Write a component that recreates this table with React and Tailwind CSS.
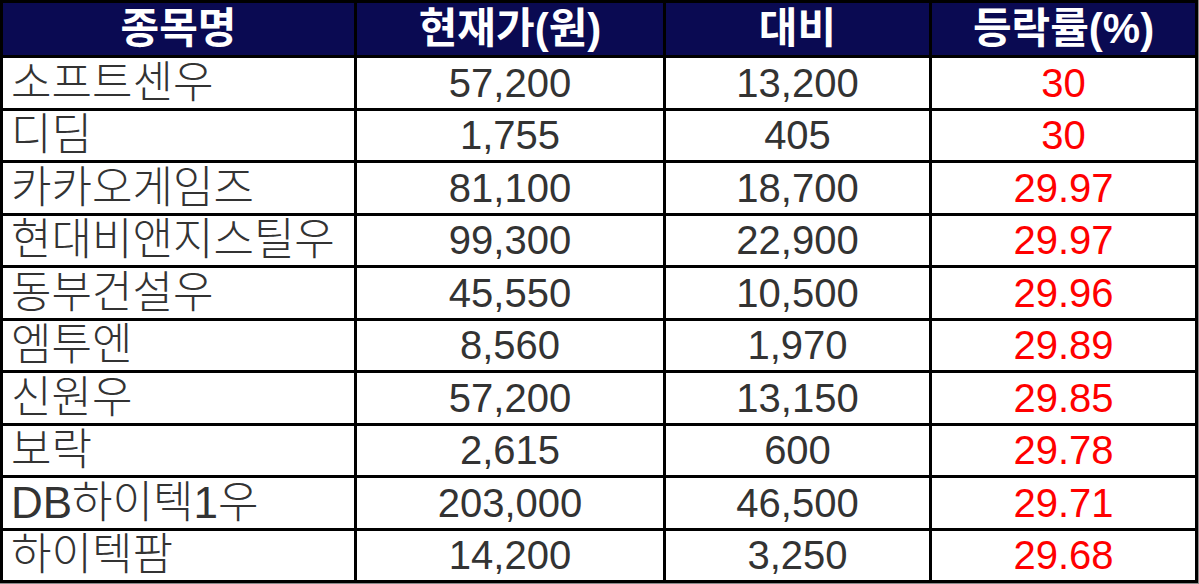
const rows = [
  ['소프트센우', '57,200', '13,200', '30'],
  ['디딤', '1,755', '405', '30'],
  ['카카오게임즈', '81,100', '18,700', '29.97'],
  ['현대비앤지스틸우', '99,300', '22,900', '29.97'],
  ['동부건설우', '45,550', '10,500', '29.96'],
  ['엠투엔', '8,560', '1,970', '29.89'],
  ['신원우', '57,200', '13,150', '29.85'],
  ['보락', '2,615', '600', '29.78'],
  ['DB하이텍1우', '203,000', '46,500', '29.71'],
  ['하이텍팜', '14,200', '3,250', '29.68'],
];

const headers = ['종목명', '현재가(원)', '대비', '등락률(%)'];

export default function App() {
  return (
    <div
      className="w-[1199px] h-[584px] bg-[#8a8a8a]"
      style={{ fontFamily: '"Liberation Sans", "Noto Sans CJK KR", sans-serif' }}
    >
      <div className="w-[1198px] grid grid-cols-[351px_306px_263px_263px] grid-rows-[52px_repeat(10,49.5px)] gap-[3px] p-[3px] bg-black">
        {headers.map((h) => (
          <div
            key={h}
            className="bg-[#0a0a52] text-white font-bold text-[42px] leading-none flex items-center justify-center"
          >
            {h}
          </div>
        ))}
        {rows.map((r) => (
          <div key={r[0]} className="contents">
            <div className="bg-white text-[#333333] text-[44px] font-light leading-none flex items-center pl-[8px] whitespace-nowrap overflow-hidden">
              {r[0]}
            </div>
            <div className="bg-white text-[#333333] text-[40px] leading-none flex items-center justify-center">
              {r[1]}
            </div>
            <div className="bg-white text-[#333333] text-[40px] leading-none flex items-center justify-center">
              {r[2]}
            </div>
            <div className="bg-white text-[#ff0000] text-[40px] leading-none flex items-center justify-center">
              {r[3]}
            </div>
          </div>
        ))}
      </div>
    </div>
  );
}
